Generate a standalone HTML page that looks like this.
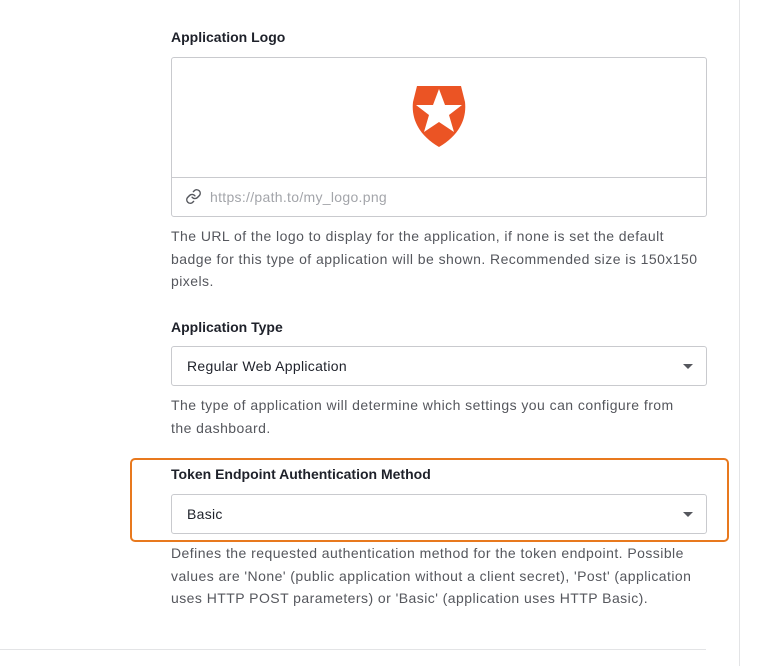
<!DOCTYPE html>
<html><head><style>
body{margin:0;width:774px;height:666px;background:#fff;font-family:"Liberation Sans",sans-serif;position:relative;overflow:hidden}
.a{position:absolute}
.lbl{position:absolute;left:171px;font-size:14px;font-weight:bold;color:#1e212a}
.desc{position:absolute;left:171px;white-space:nowrap;font-size:14px;line-height:22.5px;color:#55575d;letter-spacing:0.45px}
.sel{position:absolute;left:171px;width:534px;height:38px;border:1px solid #c9cace;border-radius:3px;font-size:14px;color:#1e212a}
.sel span{position:absolute;left:15px;top:11px;letter-spacing:0.3px}
.sel i{position:absolute;right:13px;top:17px;width:0;height:0;border-left:5px solid transparent;border-right:5px solid transparent;border-top:5px solid #55575d}
</style></head><body>
<div class="a" style="left:739px;top:0;width:1px;height:666px;background:#e3e4e6"></div>
<div class="lbl" style="top:29px">Application Logo</div>
<div class="a" style="left:171px;top:57px;width:534px;height:158px;border:1px solid #c9cace;border-radius:3px"></div>
<div class="a" style="left:172px;top:177px;width:534px;height:1px;background:#c9cace"></div>
<svg class="a" style="left:412px;top:86px" width="54" height="61" viewBox="0 0 54 61">
<path d="M5 0H49L53 16C55 34 46 50 27 61C8 50-1 34 1 16Z" fill="#eb5424"/>
<path d="M27 3L33 19L50 19L37 29L42 46L27 36L12 46L17 29L4 19L21 19Z" fill="#fff"/>
</svg>
<svg class="a" style="left:185px;top:188px" width="17" height="17" viewBox="0 0 24 24" fill="none" stroke="#55575d" stroke-width="2" stroke-linecap="round"><path d="M10 13a5 5 0 0 0 7.5.5l3-3a5 5 0 0 0-7-7l-1.7 1.7"/><path d="M14 11a5 5 0 0 0-7.5-.5l-3 3a5 5 0 0 0 7 7l1.7-1.7"/></svg>
<div class="a" style="left:210px;top:189px;font-size:14px;color:#a3a5aa;letter-spacing:0.3px">https://path.to/my_logo.png</div>
<div class="desc" style="top:225px">The URL of the logo to display for the application, if none is set the default<br>badge for this type of application will be shown. Recommended size is 150x150<br>pixels.</div>
<div class="lbl" style="top:319px">Application Type</div>
<div class="sel" style="top:346px"><span>Regular Web Application</span><i></i></div>
<div class="desc" style="top:394px">The type of application will determine which settings you can configure from<br>the dashboard.</div>
<div class="a" style="left:130px;top:458px;width:599px;height:84px;border:2px solid #e8791e;border-radius:5px;box-sizing:border-box"></div>
<div class="lbl" style="top:466px">Token Endpoint Authentication Method</div>
<div class="sel" style="top:494px"><span>Basic</span><i></i></div>
<div class="desc" style="top:542px">Defines the requested authentication method for the token endpoint. Possible<br>values are 'None' (public application without a client secret), 'Post' (application<br>uses HTTP POST parameters) or 'Basic' (application uses HTTP Basic).</div>
<div class="a" style="left:0;top:649px;width:706px;height:1px;background:#e3e4e6"></div>
</body></html>
